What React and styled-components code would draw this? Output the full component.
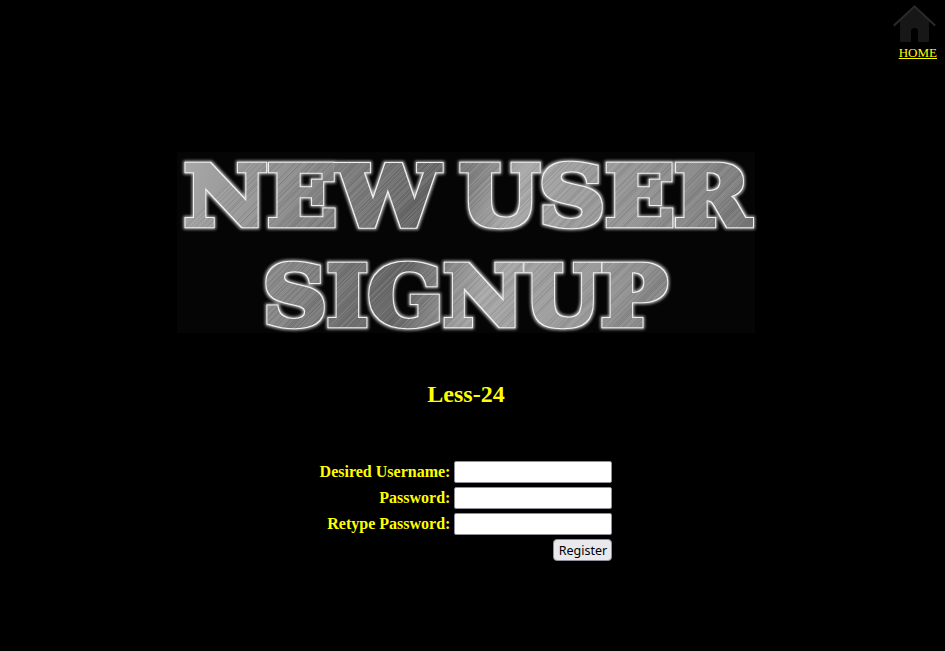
import React from 'react';
import styled, { createGlobalStyle } from 'styled-components';

const Global = createGlobalStyle`
  html, body { margin: 0; padding: 0; background: #000; }
  body { font-family: "Liberation Serif", "Times New Roman", serif; }
`;

const Page = styled.div`
  width: 945px;
  height: 651px;
  overflow: hidden;
  background: #000;
  display: flex;
  flex-direction: column;
`;

const TopBar = styled.header`
  display: flex;
  justify-content: flex-end;
  padding: 4px 8px 0 0;
  height: 152px;
  box-sizing: border-box;
`;

const HomeLink = styled.a`
  display: flex;
  flex-direction: column;
  align-items: center;
  width: 46px;
  color: #ff0;
  font-size: 13px;
  line-height: 15px;
  text-decoration: underline;
`;

const HomeLabel = styled.span`
  align-self: flex-end;
  margin-top: 1px;
`;

const Main = styled.main`
  display: flex;
  flex-direction: column;
  align-items: center;
  padding-right: 13px;
`;

const LogoSvg = styled.svg`
  display: block;
  width: 578px;
  height: 181px;
  overflow: visible;
`;

const Title = styled.h1`
  margin: 48px 0 0;
  color: #ff0;
  font-size: 24px;
  line-height: 27px;
  font-weight: bold;
`;

const Form = styled.form`
  margin-top: 53px;
  display: grid;
  grid-template-columns: auto 158px;
  column-gap: 4px;
  row-gap: 4px;
  align-items: center;
`;

const Label = styled.label`
  color: #ff0;
  font-size: 16px;
  font-weight: bold;
  text-align: right;
`;

const Input = styled.input`
  box-sizing: border-box;
  width: 158px;
  height: 22px;
  background: #fff;
  border: 1.5px solid #8f8f9d;
  border-radius: 2px;
  padding: 1px 2px;
  margin: 0;
`;

const Submit = styled.button`
  grid-column: 2;
  justify-self: end;
  box-sizing: border-box;
  width: 59px;
  height: 22px;
  padding: 0;
  margin: 0;
  background: #e9e9ed;
  border: 1.5px solid #8f8f9d;
  border-radius: 4px;
  color: #000;
  font-family: "Noto Sans", Arial, sans-serif;
  font-size: 12.5px;
`;

const hatch = Array.from({ length: 430 }, (_, i) => {
  const r = Math.abs(Math.sin(i * 12.9898) * 43758.5453) % 1;
  const s = Math.abs(Math.sin(i * 78.233) * 12543.123) % 1;
  return { x: i * 1.9 - 100 + r, light: s > 0.42, o: 0.05 + r * 0.17 };
});

function HomeIcon() {
  return (
    <svg width="46" height="40" viewBox="0 0 46 40" aria-hidden="true">
      <path d="M9 17V36.500q0 1.500 1.500 1.500H20V27q0-3 3.500-3t3.500 3V38h9.500q1.500 0 1.500-1.500V17L23.500 4Z" fill="#171717" />
      <path d="M3.500 21 L23.500 2.500 L43.500 21" fill="none" stroke="#2a2a2a" strokeWidth="2.200" strokeLinecap="round" strokeLinejoin="round" />
    </svg>
  );
}

function LogoLine({ x, y, len, children }) {
  return (
    <text
      x={x}
      y={y}
      textLength={len}
      lengthAdjust="spacingAndGlyphs"
      fontFamily='"DejaVu Serif", serif'
      fontWeight="bold"
      fontSize="83"
      wordSpacing="-10"
      strokeLinejoin="miter"
      fill="url(#metal)"
      stroke="url(#metal)"
      strokeWidth="4.500"
      filter="url(#rim)"
    >
      {children}
    </text>
  );
}

function Logo() {
  return (
    <LogoSvg viewBox="0 0 578 181">
      <defs>
        <linearGradient id="sheen" gradientUnits="userSpaceOnUse" x1="0" y1="0" x2="578" y2="181">
          <stop offset="0" stopColor="#ababab" />
          <stop offset=".2" stopColor="#8a8a8a" />
          <stop offset=".42" stopColor="#636363" />
          <stop offset=".55" stopColor="#a8a8a8" />
          <stop offset=".75" stopColor="#929292" />
          <stop offset="1" stopColor="#6c6c6c" />
        </linearGradient>
        <pattern id="metal" patternUnits="userSpaceOnUse" width="578" height="181">
          <rect width="578" height="181" fill="url(#sheen)" />
          {hatch.map((l, i) => (
            <line key={i} x1={l.x} y1="181" x2={l.x + 181} y2="0"
              stroke={l.light ? '#e0e0e0' : '#3a3a3a'} strokeOpacity={l.o} strokeWidth=".9" />
          ))}
        </pattern>
        <filter id="rim" x="-3%" y="-15%" width="106%" height="130%" colorInterpolationFilters="sRGB">
          <feMorphology in="SourceAlpha" operator="dilate" radius="1.200" result="grown" />
          <feGaussianBlur in="grown" stdDeviation=".45" result="grownSoft" />
          <feFlood floodColor="#f0f0f0" />
          <feComposite in2="grownSoft" operator="in" result="line" />
          <feMorphology in="SourceAlpha" operator="dilate" radius="2.200" result="wide" />
          <feGaussianBlur in="wide" stdDeviation="1.800" result="soft" />
          <feFlood floodColor="#ffffff" floodOpacity=".7" />
          <feComposite in2="soft" operator="in" result="glow" />
          <feMerge>
            <feMergeNode in="glow" />
            <feMergeNode in="line" />
            <feMergeNode in="SourceGraphic" />
          </feMerge>
        </filter>
      </defs>
      <rect width="578" height="181" fill="#050505" />
      <LogoLine x={7} y={73} len={566}>NEW USER</LogoLine>
      <LogoLine x={86} y={173} len={404}>SIGNUP</LogoLine>
    </LogoSvg>
  );
}

export default function App() {
  return (
    <Page>
      <Global />
      <TopBar>
        <HomeLink href="#">
          <HomeIcon />
          <HomeLabel>HOME</HomeLabel>
        </HomeLink>
      </TopBar>
      <Main>
        <Logo />
        <Title>Less-24</Title>
        <Form onSubmit={(e) => e.preventDefault()}>
          <Label>Desired Username:</Label>
          <Input type="text" />
          <Label>Password:</Label>
          <Input type="password" />
          <Label>Retype Password:</Label>
          <Input type="password" />
          <Submit type="submit">Register</Submit>
        </Form>
      </Main>
    </Page>
  );
}
